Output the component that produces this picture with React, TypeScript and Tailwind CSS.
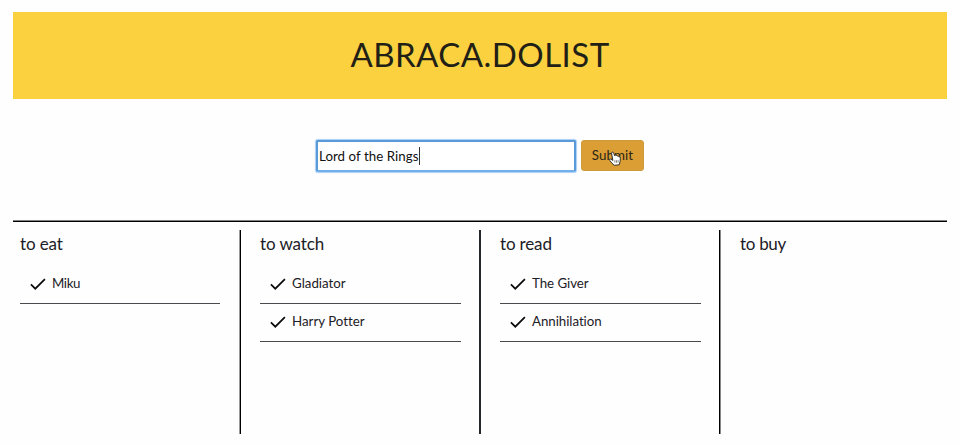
import React from "react";
type Label = { text: string; track: string };
type List = { title: Label; items: Label[]; frame: string };

const lists: List[] = [
  {
    title: { text: "to eat", track: "tracking-[-0.1px]" },
    items: [{ text: "Miku", track: "tracking-[-0.4px]" }],
    frame: "pl-[7px] pr-5 border-r border-black shadow-[inset_-1px_0_0_#999]",
  },
  {
    title: { text: "to watch", track: "tracking-[-0.1px]" },
    items: [
      { text: "Gladiator", track: "tracking-[0px]" },
      { text: "Harry Potter", track: "tracking-[0px]" },
    ],
    frame: "pl-[19px] pr-[18px] border-r-2 border-[#25282b]",
  },
  {
    title: { text: "to read", track: "tracking-[-0.15px]" },
    items: [
      { text: "The Giver", track: "tracking-[-0.05px]" },
      { text: "Annihilation", track: "tracking-[-0.05px]" },
    ],
    frame: "pl-[19px] pr-[18px] border-r border-black shadow-[1px_0_0_#888]",
  },
  { title: { text: "to buy", track: "tracking-[-0.3px]" }, items: [], frame: "pl-5" },
];

function Check() {
  return (
    <svg className="h-[14px] w-4 shrink-0" viewBox="0 0 16 14" fill="none" stroke="#0b0b0b" strokeWidth="1.7">
      <path d="M.9 7.4 5.3 11.7 14.9 2.1" />
    </svg>
  );
}

function HandCursor() {
  return (
    <svg className="absolute left-[27px] top-[10px] h-4 w-3" viewBox="0 0 12 16">
      <path
        d="M2.6 2.6c-.3-1.6 1.7-2 2.1-.6l.8 2.7.6-.6 1.4.2.5.6 1.3.1.6.8c1.1 0 1.5.6 1.4 1.6l-.2 3.3-.9 3.1-5 .5L3 12.2.8 9.5c-.7-1.1.5-1.9 1.4-1.2l1.7 1.2z"
        fill="#fff"
        stroke="#242424"
        strokeWidth=".9"
        strokeLinejoin="round"
      />
      <path d="M5.9 9.2v2.5M7.5 9.2v2.5M9.1 9.2v2.5" stroke="#333" strokeWidth=".6" />
    </svg>
  );
}

export default function App() {
  return (
    <main className="h-[444px] w-[960px] overflow-hidden bg-[#fefefe] px-[13px] pt-3 font-['Lato',sans-serif] text-[#1c2026] [font-variant-ligatures:none]">
      <header className="flex h-[87px] items-center justify-center bg-[#fbd140] pb-[3px]">
        <h1 className="whitespace-nowrap text-[33px] leading-10 tracking-[0.45px] text-[#211f16]">ABRACA.DOLIST</h1>
      </header>
      <form className="mt-[41px] flex h-8 items-start pl-[303px]" onSubmit={(e) => e.preventDefault()}>
        <div className="flex h-8 w-[260px] items-center rounded-[2px] border-2 border-[#5b9ad8] border-b-[#72aeea] bg-white pl-[1px] text-[13.3px] text-[#111] shadow-[0_0_1px_1px_#a9cff5]">
          <span className="whitespace-nowrap pt-px tracking-[0.05px]">Lord of the Rings</span>
          <span className="h-[18px] w-px bg-[#333]" />
        </div>
        <button className="relative ml-[5px] h-[31px] w-[63px] rounded-[3px] border border-[#cf9a3c] bg-[#da9e34] pt-px text-[13.3px] tracking-[0.1px] text-[#2b2416]">
          Submit
          <HandCursor />
        </button>
      </form>
      <section className="mt-12 border-t border-[#808080] pt-0">
        <div className="border-t border-black pt-2">
          <div className="grid h-[204px] grid-cols-[228px_240px_239px_227px]">
            {lists.map((list) => (
              <div key={list.title.text} className={list.frame}>
                <h2 className={`mb-2 h-7 whitespace-nowrap text-[17px] leading-7 ${list.title.track}`}>{list.title.text}</h2>
                <ul>
                  {list.items.map((item) => (
                    <li key={item.text} className="flex h-[38px] items-center gap-[6px] border-b border-[#484a4d] pb-px pl-[10px] text-[13.3px]">
                      <Check />
                      <span className={`whitespace-nowrap ${item.track}`}>{item.text}</span>
                    </li>
                  ))}
                </ul>
              </div>
            ))}
          </div>
        </div>
      </section>
    </main>
  );
}
